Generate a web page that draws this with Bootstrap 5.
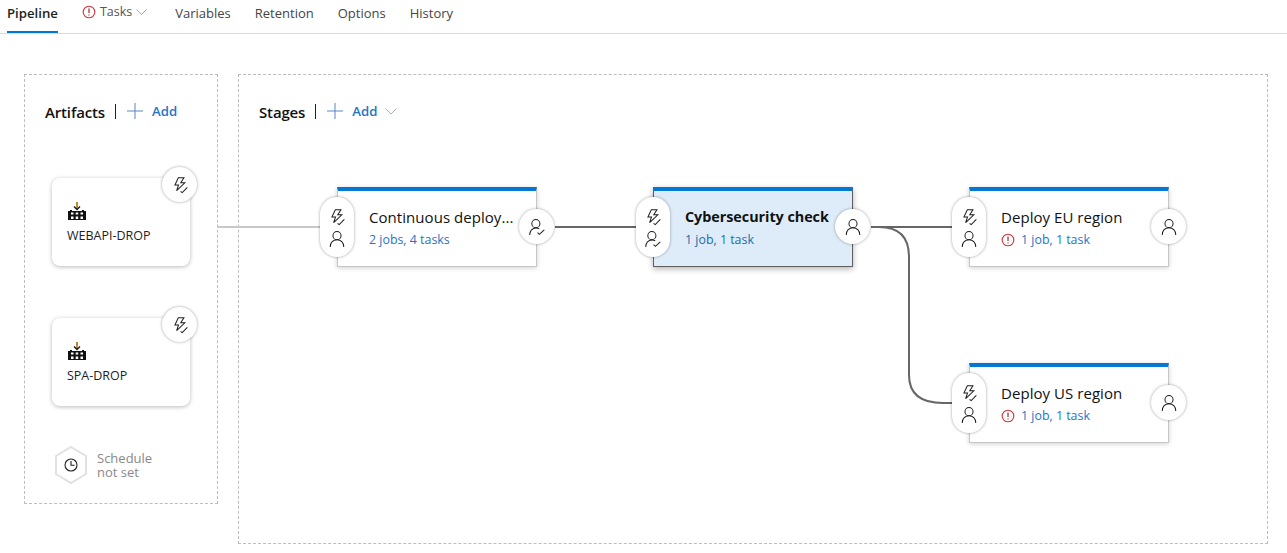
<!DOCTYPE html>
<html lang="en">
<head>
    <meta charset="UTF-8">
    <meta name="viewport" content="width=device-width, initial-scale=1.0">
    <title>Release pipeline</title>
    <link href="https://cdn.jsdelivr.net/npm/bootstrap@5.3.0/dist/css/bootstrap.min.css" rel="stylesheet">
    <style>
        body { font-family: "Open Sans", "Noto Sans", sans-serif; color: #201f1e; background: #fff; overflow: hidden; }
        .ico { stroke: #201f1e; fill: none; stroke-width: .9; display: block; }
        .pipe-tabs { height: 34px; border-bottom: 1px solid #dadada; padding-left: 7px; gap: 24px; }
        .pipe-tabs .nav-link { padding: 0; height: 33px; line-height: 27px; font-size: 13px; color: #444; }
        .pipe-tabs .nav-link.active { color: #201f1e; font-size: 13.2px; font-weight: 600; border-bottom: 2px solid #0078d4; }
        .pipe-tabs .tab-tasks { height: 24px; line-height: 24px; gap: 4px; margin-right: 4px; color: #555; font-size: 12.5px; }
        .pipe-body { position: relative; height: 519px; }
        .pipe-lines { position: absolute; left: 0; top: -34px; width: 1287px; height: 553px; z-index: 1; pointer-events: none; }
        .panel-art, .panel-stages { position: absolute; top: 40px; border: 1px dashed #bdbdbd; }
        .panel-art { left: 24px; width: 194px; height: 430px; padding: 28px 0 0 20px; }
        .panel-stages { left: 238px; width: 1030px; height: 470px; padding: 28px 0 0 20px; }
        .panel-head { height: 16px; }
        .head-title { font-size: 15px; font-weight: 600; color: #111; letter-spacing: -0.15px; margin-top: 2px; }
        .head-sep { width: 1px; height: 15px; background: #222; margin: 0 11px 0 10px; }
        .add-link { color: #2673c4; font-size: 13.2px; font-weight: 600; text-decoration: none; margin: 1px 0 0 1px; }
        .add-plus { stroke: #5a86c9; }
        .art-list { margin: 59px 0 0 7px; gap: 52px; }
        .art-card { position: relative; width: 138px; height: 88px; border-radius: 8px; background: #fff; box-shadow: 0 1px 4px rgba(0,0,0,.28); padding: 23px 0 0 15px; z-index: 2; }
        .art-name { font-size: 12.5px; margin-top: 6px; color: #201f1e; }
        .round-btn { position: absolute; width: 35px; height: 35px; border-radius: 50%; background: #fff; box-shadow: 0 0 3px rgba(0,0,0,.38); z-index: 3; }
        .art-card .round-btn { right: -7px; top: -11px; }
        .sched-row { margin: 39px 0 0 9px; }
        .sched-text { font-size: 13px; line-height: 14px; color: #8a8886; margin-left: 9px; }
        .stage-node { position: absolute; width: 200px; height: 80px; background: #fff; border: 1px solid #c8c6c4; border-top: 4px solid #0078d4; box-shadow: 0 1px 5px rgba(0,0,0,.18); padding: 16px 0 0 31px; z-index: 2; }
        .stage-node.selected { background: #deecf9; border-color: #605e5c; border-top-color: #0078d4; box-shadow: 0 2px 6px rgba(0,0,0,.3); }
        .node-a { left: 98px; top: 112px; }
        .node-b { left: 414px; top: 112px; }
        .node-c { left: 730px; top: 112px; }
        .node-d { left: 730px; top: 288px; }
        .stage-name { font-size: 15px; line-height: 20px; color: #111; white-space: nowrap; letter-spacing: .05px; }
        .selected .stage-name { font-weight: 700; font-size: 14.4px; letter-spacing: -0.05px; }
        .stage-meta { font-size: 12.4px; line-height: 16px; margin-top: 5px; color: #2673c4; }
        .selected .stage-meta { color: #1c6aa8; }
        .warn-mark { margin-right: 6px; }
        .left-pill { position: absolute; left: -18px; top: 6px; width: 34px; height: 60px; border-radius: 17px; background: #fff; box-shadow: 0 0 3px rgba(0,0,0,.38); padding-top: 11px; gap: 4px; }
        .stage-node .round-btn { right: -18px; top: 18px; }
    </style>
</head>
<body>

    <svg class="d-none">
        <symbol id="i-bolt" viewBox="0 0 16 16">
            <path d="M6.500 1.500h5L8.700 6h3.600L5 13l1.700-5H3.500z"/>
            <path d="M8.500 13.600l1.500 1.200 4.500-4.600"/>
        </symbol>
        <symbol id="i-user" viewBox="0 0 16 16">
            <circle cx="8" cy="5" r="3.600"/>
            <path d="M2 15c0-3.800 2.600-6.300 6-6.300s6 2.500 6 6.300"/>
        </symbol>
        <symbol id="i-user-ok" viewBox="0 0 16 16">
            <circle cx="7" cy="5" r="3.600"/>
            <path d="M1.500 15c0-3.600 2.500-6.200 5.500-6.200 1.200 0 2.200.3 3 .9"/>
            <path d="M8.500 13l1.600 1.500 4.400-4"/>
        </symbol>
        <symbol id="i-warn" viewBox="0 0 14 14">
            <circle cx="7" cy="7" r="5.800" fill="none" stroke="#d13438" stroke-width="1.100"/>
            <path d="M7 3.600v4.400M7 9.400v1.100" stroke="#a4262c" stroke-width="1.200" fill="none"/>
        </symbol>
        <symbol id="i-build" viewBox="0 0 20 20">
            <path d="M10 1v7" stroke="#b46a00" stroke-width="1.600" fill="none"/>
            <path d="M7 5.500l3 3 3-3" stroke="#1a1a1a" stroke-width="1.400" fill="none"/>
            <path d="M1 10h2v-1h2v1h10v-1h2v1h2v9H1z" fill="#111"/>
            <path d="M4 11.500h2.500v2H4zM8.700 11.500h2.500v2H8.700zM13.500 11.500H16v2h-2.500zM4 15.500h2.500V18H4zM13.500 15.500H16V18h-2.500zM8.700 15.500h2.500V18H8.700z" fill="#fff"/>
        </symbol>
    </svg>

    <ul class="nav pipe-tabs flex-nowrap">
        <li class="nav-item"><a class="nav-link active" href="#">Pipeline</a></li>
        <li class="nav-item">
            <a class="nav-link tab-tasks d-flex align-items-center" href="#">
                <svg class="flex-shrink-0" width="14" height="14"><use href="#i-warn"/></svg>
                <span>Tasks</span>
                <svg width="11" height="6" viewBox="0 0 11 6"><path d="M.5.5l5 5 5-5" fill="none" stroke="#a6a6a6"/></svg>
            </a>
        </li>
        <li class="nav-item"><a class="nav-link" href="#">Variables</a></li>
        <li class="nav-item"><a class="nav-link" href="#">Retention</a></li>
        <li class="nav-item"><a class="nav-link" href="#">Options</a></li>
        <li class="nav-item"><a class="nav-link" href="#">History</a></li>
    </ul>

    <div class="pipe-body">
        <section class="panel-art">
            <div class="panel-head d-flex align-items-center">
                <span class="head-title">Artifacts</span><span class="head-sep"></span>
                <svg class="add-plus me-2" width="16" height="16" viewBox="0 0 16 16"><path d="M8 0v16M0 8h16" fill="none"/></svg>
                <a class="add-link" href="#">Add</a>
            </div>
            <div class="art-list d-flex flex-column">
                <div class="art-card">
                    <svg class="d-block" width="20" height="20" viewBox="0 0 20 20"><use href="#i-build"/></svg>
                    <div class="art-name">WEBAPI-DROP</div>
                    <div class="round-btn d-flex align-items-center justify-content-center"><svg class="ico" width="18" height="18"><use href="#i-bolt"/></svg></div>
                </div>
                <div class="art-card">
                    <svg class="d-block" width="20" height="20" viewBox="0 0 20 20"><use href="#i-build"/></svg>
                    <div class="art-name">SPA-DROP</div>
                    <div class="round-btn d-flex align-items-center justify-content-center"><svg class="ico" width="18" height="18"><use href="#i-bolt"/></svg></div>
                </div>
            </div>
            <div class="sched-row d-flex align-items-center">
                <svg width="34" height="40" viewBox="0 0 34 40">
                    <path d="M17 2l15 9v18l-15 9-15-9V11z" fill="#fff" stroke="#e1e1e1" stroke-width="2"/>
                    <circle cx="17" cy="20" r="6" fill="none" stroke="#201f1e" stroke-width="1.100"/>
                    <path d="M17 16v4.300h3.600" fill="none" stroke="#201f1e" stroke-width="1.100"/>
                </svg>
                <div class="sched-text">Schedule<br>not set</div>
            </div>
        </section>

        <section class="panel-stages">
            <div class="panel-head d-flex align-items-center">
                <span class="head-title">Stages</span><span class="head-sep"></span>
                <svg class="add-plus me-2" width="16" height="16" viewBox="0 0 16 16"><path d="M8 0v16M0 8h16" fill="none"/></svg>
                <a class="add-link" href="#">Add</a>
                <svg class="ms-2" width="12" height="7" viewBox="0 0 12 7"><path d="M.5.5l5.500 5.500 5.500-5.500" fill="none" stroke="#9db4d6"/></svg>
            </div>

            <div class="stage-node node-a">
                <div class="left-pill d-flex flex-column align-items-center">
                    <svg class="ico" width="18" height="18"><use href="#i-bolt"/></svg>
                    <svg class="ico" width="18" height="18"><use href="#i-user"/></svg>
                </div>
                <div class="stage-name">Continuous deploy...</div>
                <div class="stage-meta">2 jobs, 4 tasks</div>
                <div class="round-btn d-flex align-items-center justify-content-center"><svg class="ico" width="18" height="18"><use href="#i-user-ok"/></svg></div>
            </div>

            <div class="stage-node node-b selected">
                <div class="left-pill d-flex flex-column align-items-center">
                    <svg class="ico" width="18" height="18"><use href="#i-bolt"/></svg>
                    <svg class="ico" width="18" height="18"><use href="#i-user-ok"/></svg>
                </div>
                <div class="stage-name">Cybersecurity check</div>
                <div class="stage-meta">1 job, 1 task</div>
                <div class="round-btn d-flex align-items-center justify-content-center"><svg class="ico" width="18" height="18"><use href="#i-user"/></svg></div>
            </div>

            <div class="stage-node node-c">
                <div class="left-pill d-flex flex-column align-items-center">
                    <svg class="ico" width="18" height="18"><use href="#i-bolt"/></svg>
                    <svg class="ico" width="18" height="18"><use href="#i-user"/></svg>
                </div>
                <div class="stage-name">Deploy EU region</div>
                <div class="stage-meta d-flex align-items-center"><svg class="warn-mark" width="14" height="14"><use href="#i-warn"/></svg>1 job, 1 task</div>
                <div class="round-btn d-flex align-items-center justify-content-center"><svg class="ico" width="18" height="18"><use href="#i-user"/></svg></div>
            </div>

            <div class="stage-node node-d">
                <div class="left-pill d-flex flex-column align-items-center">
                    <svg class="ico" width="18" height="18"><use href="#i-bolt"/></svg>
                    <svg class="ico" width="18" height="18"><use href="#i-user"/></svg>
                </div>
                <div class="stage-name">Deploy US region</div>
                <div class="stage-meta d-flex align-items-center"><svg class="warn-mark" width="14" height="14"><use href="#i-warn"/></svg>1 job, 1 task</div>
                <div class="round-btn d-flex align-items-center justify-content-center"><svg class="ico" width="18" height="18"><use href="#i-user"/></svg></div>
            </div>
        </section>

        <svg class="pipe-lines" viewBox="0 0 1287 553">
            <path d="M218 227H320" fill="none" stroke="#c8c8c8" stroke-width="2"/>
            <path d="M555 227H636M871 227H952" fill="none" stroke="#666" stroke-width="2"/>
            <path d="M871 227h8c20 0 30 10 30 30V375c0 18 10 28 34 28h9" fill="none" stroke="#666" stroke-width="2"/>
        </svg>
    </div>

    <script src="https://cdn.jsdelivr.net/npm/bootstrap@5.3.0/dist/js/bootstrap.bundle.min.js"></script>
</body>
</html>
